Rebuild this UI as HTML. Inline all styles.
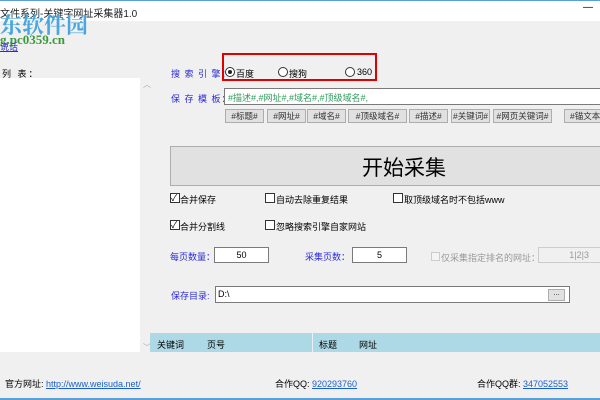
<!DOCTYPE html><html><head><meta charset="utf-8"><style>
body{margin:0;width:600px;height:400px;background:#f0f0f0;position:relative;overflow:hidden;font-family:"Liberation Sans","Noto Sans CJK SC",sans-serif;font-size:9px;color:#000}
div,span{position:absolute;white-space:nowrap}
.b{color:#2b2bd6;letter-spacing:1px}
.btn{background:#e1e1e1;border:1px solid #adadad;height:12px;top:109px;line-height:12px;text-align:center;font-size:8.5px;color:#333}
.cb{width:8px;height:8px;border:1px solid #333;background:#fff}
.in{background:#fff;border:1px solid #7a7a7a}
a{color:#1a5fd0;text-decoration:underline}
</style></head><body>
<div style="left:0;top:0;width:600px;height:1px;background:#5a9fd8"></div>
<div style="left:0;top:1px;width:600px;height:20px;background:#fff"></div>
<div style="left:0;top:5px;font-size:10px;color:#222">文件系列-关键字网址采集器1.0</div>
<div style="left:583px;top:2px;font-size:10px">—</div>
<div style="left:0;top:9px;font-size:22px;font-weight:bold;color:#4aa6e0;font-family:'Noto Serif CJK SC',serif">东软件园</div>
<div style="left:0;top:32px;font-size:13px;font-weight:bold;color:#3a9a3a;font-family:'Liberation Serif',serif">g.pc0359.cn</div>
<div style="left:0;top:40px;font-size:9px;color:#2b2bd6;text-decoration:underline">说话</div>
<div style="left:2px;top:67px;font-size:9px;letter-spacing:2px">列 表：</div>
<div style="left:0;top:78px;width:140px;height:274px;background:#fff"></div>
<div style="left:143px;top:79px;font-size:8px;color:#aaa">︿</div>
<div style="left:143px;top:342px;font-size:8px;color:#aaa">﹀</div>
<div class="b" style="left:171px;top:67px">搜 索 引 擎：</div>
<div style="left:222px;top:53px;width:155px;height:28px;border:2px solid #e00000;box-sizing:border-box"></div>
<div style="left:225px;top:67px;width:8px;height:8px;border:1px solid #333;border-radius:50%;background:#fff"></div>
<div style="left:228px;top:70px;width:4px;height:4px;border-radius:50%;background:#222"></div>
<div style="left:236px;top:67px">百度</div>
<div style="left:278px;top:67px;width:8px;height:8px;border:1px solid #333;border-radius:50%;background:#fff"></div>
<div style="left:289px;top:67px">搜狗</div>
<div style="left:345px;top:67px;width:8px;height:8px;border:1px solid #333;border-radius:50%;background:#fff"></div>
<div style="left:357px;top:67px">360</div>
<div class="b" style="left:171px;top:92px">保 存 模 板：</div>
<div class="in" style="left:224px;top:88px;width:380px;height:15px"></div>
<div style="left:228px;top:91px;color:#2e9a5a">#描述#,#网址#,#域名#,#顶级域名#,</div>
<div class="btn" style="left:225px;width:37px">#标题#</div>
<div class="btn" style="left:267px;width:37px">#网址#</div>
<div class="btn" style="left:307px;width:37px">#域名#</div>
<div class="btn" style="left:348px;width:57px">#顶级域名#</div>
<div class="btn" style="left:409px;width:37px">#描述#</div>
<div class="btn" style="left:451px;width:37px">#关键词#</div>
<div class="btn" style="left:493px;width:57px">#网页关键词#</div>
<div class="btn" style="left:564px;width:45px">#锚文本#</div>
<div style="left:170px;top:146px;width:440px;height:38px;background:#e1e1e1;border:1px solid #adadad"></div>
<div style="left:362px;top:152px;font-size:21px">开始采集</div>
<div class="cb" style="left:170px;top:193px"></div><div style="left:171px;top:191px;font-size:9px">✓</div><div style="left:180px;top:193px">合并保存</div>
<div class="cb" style="left:265px;top:193px"></div><div style="left:276px;top:193px">自动去除重复结果</div>
<div class="cb" style="left:393px;top:193px"></div><div style="left:404px;top:193px">取顶级域名时不包括www</div>
<div class="cb" style="left:170px;top:220px"></div><div style="left:171px;top:218px;font-size:9px">✓</div><div style="left:180px;top:220px">合并分割线</div>
<div class="cb" style="left:265px;top:220px"></div><div style="left:276px;top:220px">忽略搜索引擎自家网站</div>
<div style="left:170px;top:250px;color:#2b2bd6">每页数量：</div>
<div class="in" style="left:214px;top:247px;width:53px;height:14px;text-align:center;line-height:14px">50</div>
<div style="left:305px;top:250px;color:#2b2bd6">采集页数：</div>
<div class="in" style="left:352px;top:247px;width:53px;height:14px;text-align:center;line-height:14px">5</div>
<div style="left:431px;top:252px;width:7px;height:7px;border:1px solid #ccc;background:#f4f4f4"></div>
<div style="left:441px;top:251px;color:#999">仅采集指定排名的网址：</div>
<div style="left:538px;top:247px;width:70px;height:14px;border:1px solid #ccc;color:#999;line-height:14px;text-align:right;padding-right:0">1|2|3&nbsp;&nbsp;&nbsp;&nbsp;&nbsp;&nbsp;&nbsp;&nbsp;</div>
<div style="left:171px;top:289px;color:#2b2bd6">保存目录:</div>
<div class="in" style="left:215px;top:286px;width:353px;height:15px"></div>
<div style="left:218px;top:289px">D:\</div>
<div style="left:548px;top:289px;width:15px;height:10px;background:#e1e1e1;border:1px solid #adadad;font-size:7px;text-align:center;line-height:8px">...</div>
<div style="left:150px;top:333px;width:450px;height:19px;background:#add8e6"></div>
<div style="left:312px;top:333px;width:1px;height:19px;background:#e8f2f6"></div>
<div style="left:157px;top:338px">关键词</div><div style="left:207px;top:338px">页号</div>
<div style="left:319px;top:338px">标题</div><div style="left:359px;top:338px">网址</div>
<div style="left:5px;top:377px">官方网址: <a>http://www.weisuda.net/</a></div>
<div style="left:275px;top:377px">合作QQ: <a>920293760</a></div>
<div style="left:477px;top:377px">合作QQ群: <a>347052553</a></div>
<div style="left:0;top:398px;width:600px;height:2px;background:#5a9fd8"></div>
</body></html>
